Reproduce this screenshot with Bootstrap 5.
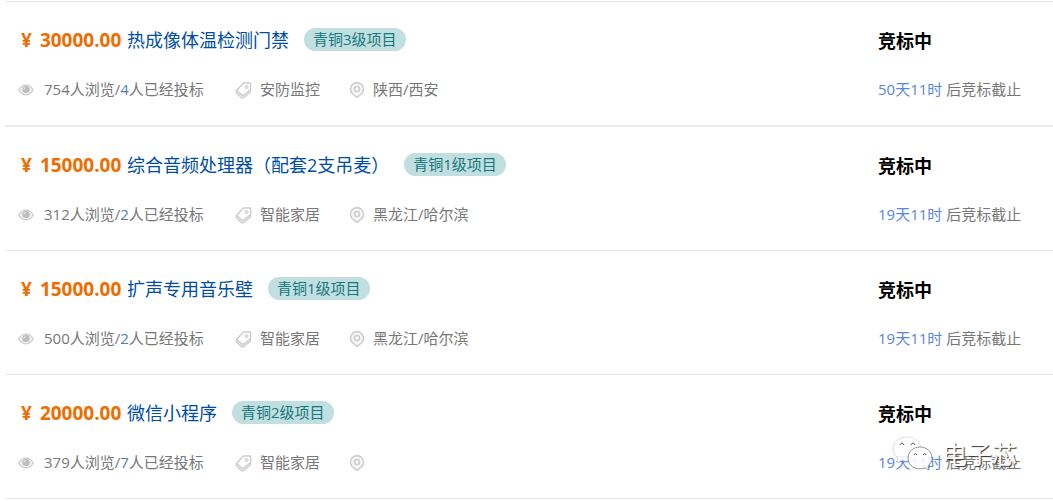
<!DOCTYPE html>
<html lang="zh-CN">
<head>
<meta charset="utf-8">
<meta name="viewport" content="width=device-width, initial-scale=1">
<title>竞标项目</title>
<link href="https://cdn.jsdelivr.net/npm/bootstrap@5.3.0/dist/css/bootstrap.min.css" rel="stylesheet">
<style>
body{font-family:"Open Sans","Noto Sans CJK SC",sans-serif;font-size:15px;line-height:24px;color:#777;background:#fff}
.project-list{margin:1px 0 0 5px;border-top:1px solid #ebebeb}
.project{padding:26px 0 24px 13px;border-bottom:1px solid #ebebeb}
.project:first-child{border-bottom-width:2px}
.headline{height:24px;margin-bottom:25px}
.price{font-size:19px;font-weight:700;color:#ed6d00;width:109px;padding-left:3px;gap:8px}
.project-title{font-size:18px;color:#004ea2;text-decoration:none}
.project-title:hover{text-decoration:underline}
.level{margin:0 0 1px 15px;padding:0 9px;height:23px;line-height:22px;font-size:15px;font-weight:400;color:#15787c;background:#c1dee0}
.info svg{flex:none;margin-top:2px}
.views{width:217px;gap:10px}
.bids{color:#4f7fb0}
.category{width:114px;gap:8px}
.region{gap:8px}
.status{width:175px}
.state{font-size:18px;font-weight:700;line-height:26px;color:#000}
.remain{color:#5b87d9}
.watermark{right:36px;bottom:2px;gap:8px;font-size:25px;line-height:32px;color:#fff;text-shadow:1px 1px 1px #333;pointer-events:none}
</style>
</head>
<body>
<svg class="d-none" aria-hidden="true">
  <symbol id="eye" viewBox="0 0 16 12"><path d="M.7 6Q3.500 1.200 8 1.200T15.300 6Q12.500 10.800 8 10.800T.7 6Z" fill="#eee" stroke="#cdcdcd" stroke-width="1.300"/><circle cx="8" cy="5.500" r="3.600" fill="#bdbdbd"/><path d="M6 5.500Q6 3.800 7.700 3.500" fill="none" stroke="#eee"/></symbol>
  <symbol id="tag" viewBox="0 0 17 17"><path d="M8.500 1.200h7V7.500L8 13.500 1.500 8.500Z" fill="#fff" stroke="#cdcdcd" stroke-width="1.400" stroke-linejoin="round"/><path d="M1.200 8.500V10.500L6.500 15.800H8.500L15.500 10V7.500" fill="#e6e6e6" stroke="#cdcdcd" stroke-width="1.200" stroke-linejoin="round"/><path d="M2 9 8 13.800 15 8 8 7Z" fill="#fff"/><path d="M8.500 1.200h7V7.500L8 13.500 1.500 8.500Z" fill="#fff" stroke="#cdcdcd" stroke-width="1.200" stroke-linejoin="round"/><circle cx="11.500" cy="5" r="1.500" fill="#e6e6e6" stroke="#cdcdcd"/></symbol>
  <symbol id="pin" viewBox="0 0 16 18"><path d="M8 16.500 3.200 12.500A6.500 6.500 0 1 1 12.800 12.500Z" fill="#f6f6f6" stroke="#cdcdcd" stroke-width="1.600" stroke-linejoin="round"/><circle cx="8" cy="8" r="2.500" fill="#fff" stroke="#cdcdcd" stroke-width="1.600"/></symbol>
</svg>
<main class="project-list position-relative">
  <article class="project d-flex">
    <div class="flex-grow-1">
      <div class="headline d-flex align-items-center"><span class="price d-flex"><span>¥</span><span>30000.00</span></span><a class="project-title" href="#">热成像体温检测门禁</a><span class="level badge rounded-pill">青铜3级项目</span></div>
      <div class="info d-flex"><span class="views d-flex align-items-center"><svg width="16" height="12"><use href="#eye"/></svg><span>754人浏览/<span class="bids">4</span>人已经投标</span></span><span class="category d-flex align-items-center"><svg width="17" height="17"><use href="#tag"/></svg>安防监控</span><span class="region d-flex align-items-center"><svg width="16" height="18"><use href="#pin"/></svg>陕西/西安</span></div>
    </div>
    <div class="status flex-shrink-0"><div class="headline state">竞标中</div><div><span class="remain">50天11时</span> 后竞标截止</div></div>
  </article>
  <article class="project d-flex">
    <div class="flex-grow-1">
      <div class="headline d-flex align-items-center"><span class="price d-flex"><span>¥</span><span>15000.00</span></span><a class="project-title" href="#">综合音频处理器（配套2支吊麦）</a><span class="level badge rounded-pill">青铜1级项目</span></div>
      <div class="info d-flex"><span class="views d-flex align-items-center"><svg width="16" height="12"><use href="#eye"/></svg><span>312人浏览/<span class="bids">2</span>人已经投标</span></span><span class="category d-flex align-items-center"><svg width="17" height="17"><use href="#tag"/></svg>智能家居</span><span class="region d-flex align-items-center"><svg width="16" height="18"><use href="#pin"/></svg>黑龙江/哈尔滨</span></div>
    </div>
    <div class="status flex-shrink-0"><div class="headline state">竞标中</div><div><span class="remain">19天11时</span> 后竞标截止</div></div>
  </article>
  <article class="project d-flex">
    <div class="flex-grow-1">
      <div class="headline d-flex align-items-center"><span class="price d-flex"><span>¥</span><span>15000.00</span></span><a class="project-title" href="#">扩声专用音乐壁</a><span class="level badge rounded-pill">青铜1级项目</span></div>
      <div class="info d-flex"><span class="views d-flex align-items-center"><svg width="16" height="12"><use href="#eye"/></svg><span>500人浏览/<span class="bids">2</span>人已经投标</span></span><span class="category d-flex align-items-center"><svg width="17" height="17"><use href="#tag"/></svg>智能家居</span><span class="region d-flex align-items-center"><svg width="16" height="18"><use href="#pin"/></svg>黑龙江/哈尔滨</span></div>
    </div>
    <div class="status flex-shrink-0"><div class="headline state">竞标中</div><div><span class="remain">19天11时</span> 后竞标截止</div></div>
  </article>
  <article class="project d-flex position-relative">
    <div class="flex-grow-1">
      <div class="headline d-flex align-items-center"><span class="price d-flex"><span>¥</span><span>20000.00</span></span><a class="project-title" href="#">微信小程序</a><span class="level badge rounded-pill">青铜2级项目</span></div>
      <div class="info d-flex"><span class="views d-flex align-items-center"><svg width="16" height="12"><use href="#eye"/></svg><span>379人浏览/<span class="bids">7</span>人已经投标</span></span><span class="category d-flex align-items-center"><svg width="17" height="17"><use href="#tag"/></svg>智能家居</span><span class="region d-flex align-items-center"><svg width="16" height="18"><use href="#pin"/></svg></span></div>
    </div>
    <div class="status flex-shrink-0"><div class="headline state">竞标中</div><div><span class="remain">19天11时</span> 后竞标截止</div></div>
    <div class="watermark position-absolute d-flex align-items-center mb-4">
      <svg width="42" height="36" viewBox="0 0 42 36" fill="#fff" fill-opacity=".85"><path d="M15 1C7 1 1 6 1 13c0 4 2 7 5 9l-1 5 5-3c2 1 6 1 8 0L29 11C28 5 22 1 15 1Z"/><path d="M15 1C7 1 1 6 1 13c0 4 2 7 5 9l-1 5 5-3c2 1 4 1 6 1" fill="none" stroke="#ccc" stroke-width=".7"/><path d="M15 1c7 0 13 4 14 10" fill="none" stroke="#ddd" stroke-width=".7"/><path d="M28 11c7 0 12 5 12 11 0 4-2 6-4 8l1 4-4-2c-9 3-17-2-17-10 0-6 5-11 12-11Z" stroke="#777" stroke-width=".8"/><path d="M8 9q2-4 4 0M19 9q2-4 4 0M22 19q2-3 3 0M31 19q2-3 3 0" fill="none" stroke="#555"/></svg>
      <span>电子芯</span>
    </div>
  </article>
</main>
<script src="https://cdn.jsdelivr.net/npm/bootstrap@5.3.0/dist/js/bootstrap.bundle.min.js"></script>
</body>
</html>
